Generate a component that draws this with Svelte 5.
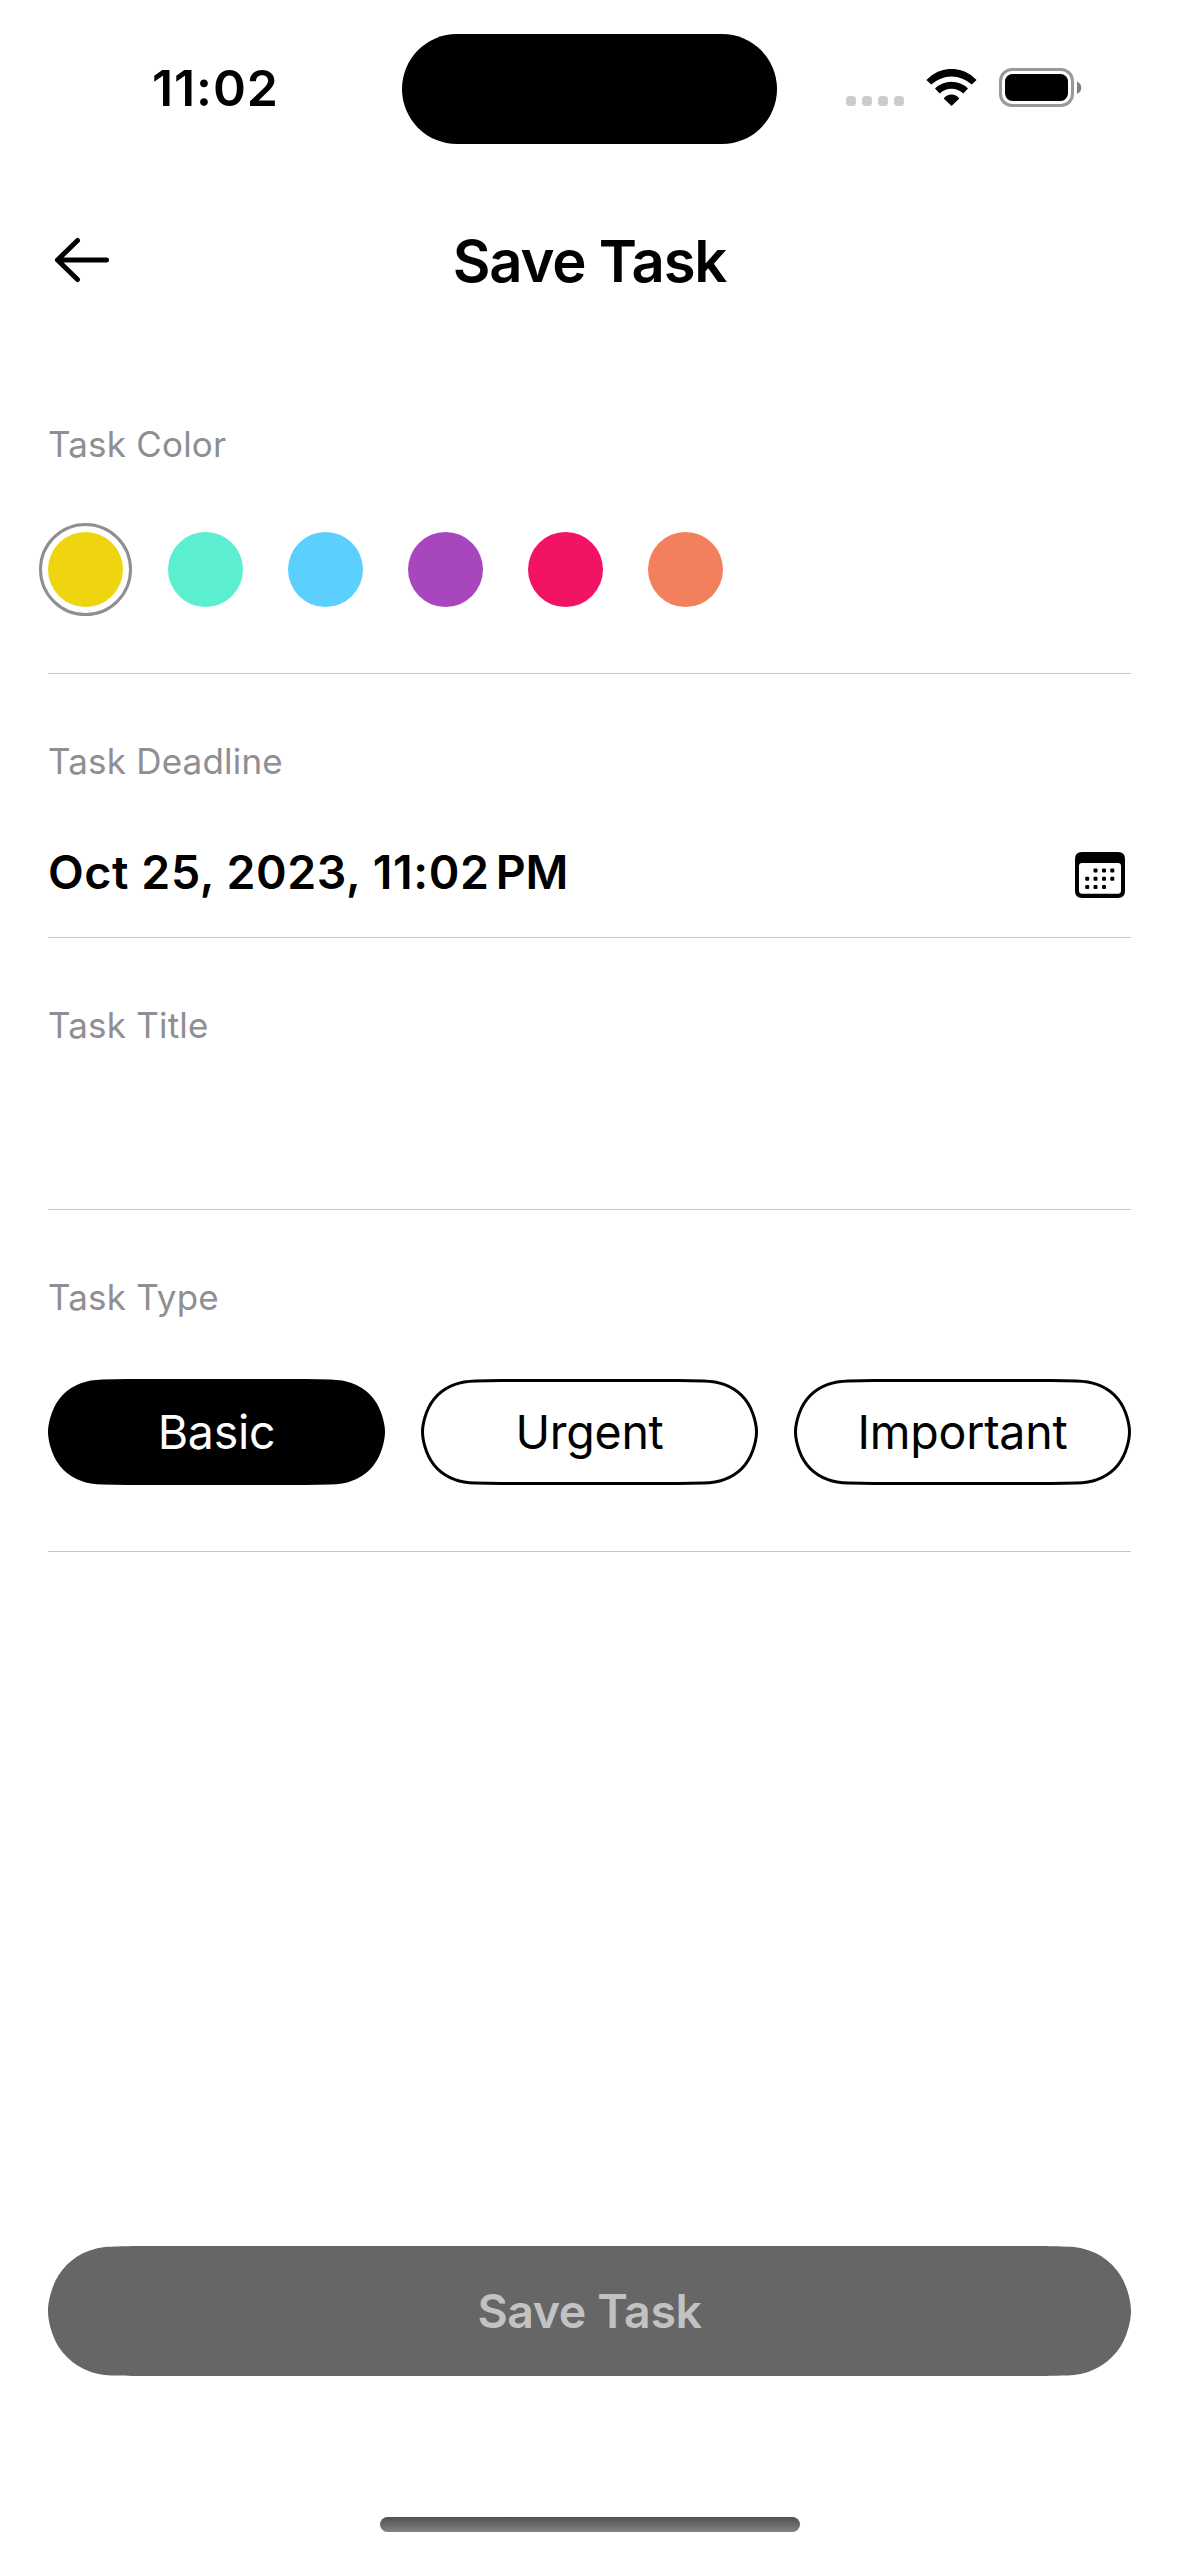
<script>
  const colors = ['#efd510', '#5befcf', '#5bd0ff', '#a746bd', '#f21365', '#f2805c'];
  const types = ['Basic', 'Urgent', 'Important'];
  let color = $state(0);
  let type = $state('Basic');

  // Capsule with continuous (smoothed) corners, inset for a centred stroke.
  function capsule(width, height, inset = 0) {
    const w = width - inset * 2;
    const h = height - inset * 2;
    const r = h / 2;
    // Control points from the flat edge round to the side, in units of r.
    const points = [
      [1.5287, 0],
      [1.3, 0], [1.15, 0.004], [1.03, 0.008],
      [0.88, 0.013], [0.77, 0.022], [0.6315, 0.0749],
      [0.3728, 0.1691], [0.1691, 0.3728], [0.0749, 0.6315],
      [0.0374, 0.7351], [0, 0.87], [0, 1]
    ];
    const place = (right, bottom) =>
      points.map(([x, y]) => {
        const px = right ? inset + w - x * r : inset + x * r;
        const py = bottom ? inset + h - y * r : inset + y * r;
        return `${px.toFixed(2)} ${py.toFixed(2)}`;
      });
    const right = [...place(true, false), ...place(true, true).reverse().slice(1)];
    const left = [...place(false, true), ...place(false, false).reverse().slice(1)];
    return `M${right[0]}C${right.slice(1).join(' ')}L${left[0]}C${left.slice(1).join(' ')}Z`;
  }

  const calendarDots = [
    [20.5, 18.5], [29, 18.5], [37.3, 18.5],
    [12.2, 26.7], [20.5, 26.7], [29, 26.7], [37.3, 26.7],
    [12.2, 35], [20.5, 35], [29, 35]
  ];
</script>

<div class="screen">
  <header class="status">
    <div class="time">11:02</div>
    <div class="island"></div>
    <div class="indicators">
      <div class="cell"><i></i><i></i><i></i><i></i></div>
      <svg class="wifi" width="51" height="38" viewBox="0 0 51 38">
        <path d="M0.4 11A33.9 33.9 0 0 1 50.6 11L45.8 15.6A29.8 29.8 0 0 0 5.2 15.6Z" />
        <path d="M9 19.4A24 24 0 0 1 42 19.4L37.3 24.4A17.2 17.2 0 0 0 13.7 24.4Z" />
        <path d="M17.7 29.6C21.5 24 29.5 24 33.3 29.6L25.5 37Z" />
      </svg>
      <svg class="battery" width="83" height="39" viewBox="0 0 83 39">
        <rect x="1.5" y="1.5" width="72" height="36" rx="11.5" fill="none" stroke="#999" stroke-width="3" />
        <rect x="6" y="6" width="63" height="27" rx="7.5" />
        <path d="M78 13.5Q82.3 15.5 82.3 19.7T78 26Z" fill="#808080" />
      </svg>
    </div>
  </header>

  <nav class="nav">
    <button class="back" aria-label="Back">
      <svg width="56" height="46" viewBox="0 0 56 46" fill="none" stroke="#000" stroke-width="5" stroke-linecap="round" stroke-linejoin="round">
        <path d="M52.5 23H3.5M23.5 3.5L3.5 23L23.5 42.5" />
      </svg>
    </button>
    <h1>Save Task</h1>
  </nav>

  <main>
    <section class="colors">
      <div class="label">Task Color</div>
      <div class="swatches">
        {#each colors as c, i}
          <button class="swatch" class:selected={color === i} style:background={c} aria-label={`Color ${i + 1}`} onclick={() => (color = i)}></button>
        {/each}
      </div>
    </section>

    <section class="deadline">
      <div class="label">Task Deadline</div>
      <div class="date-row">
        <span class="date">Oct 25, 2023, 11:02<span class="pm">PM</span></span>
        <svg class="calendar" width="50" height="46" viewBox="0 0 50 46">
          <path fill-rule="evenodd" d="M7 0H43Q50 0 50 7V39Q50 46 43 46H7Q0 46 0 39V7Q0 0 7 0ZM7 11Q4 11 4 14V38.5Q4 41.7 7 41.7H43Q46 41.7 46 38.5V14Q46 11 43 11Z" />
          {#each calendarDots as [x, y]}
            <rect x={x - 2} y={y - 2} width="4" height="4" rx="1" />
          {/each}
        </svg>
      </div>
    </section>

    <section class="title">
      <div class="label">Task Title</div>
    </section>

    <section class="type">
      <div class="label">Task Type</div>
      <div class="pills">
        {#each types as t}
          <button class="pill" class:active={type === t} onclick={() => (type = t)}>
            <svg class="shape" width="337" height="106" viewBox="0 0 337 106"><path d={capsule(337, 106, 1.5)} /></svg>
            <span>{t}</span>
          </button>
        {/each}
      </div>
    </section>
  </main>

  <footer>
    <button class="save">
      <svg class="shape" width="1083" height="130" viewBox="0 0 1083 130"><path d={capsule(1083, 130)} /></svg>
      <span>Save Task</span>
    </button>
    <div class="home"></div>
  </footer>
</div>

<style>
  :global(body) { background: #fff; }
  .screen {
    width: 1179px; height: 2556px; box-sizing: border-box; overflow: hidden;
    display: flex; flex-direction: column; background: #fff; color: #000;
    font-family: Inter, "Liberation Sans", sans-serif; font-kerning: normal;
  }
  button { border: 0; padding: 0; background: none; font: inherit; color: inherit; }
  svg { display: block; }
  .status { height: 178px; display: grid; grid-template-columns: 402px 375px 402px; flex: none; }
  .time { padding: 58px 0 0 152px; font-size: 50px; line-height: 60px; font-weight: 600; letter-spacing: 0.9px; white-space: nowrap; }
  .island { height: 110px; margin-top: 34px; border-radius: 55px; background: #000; }
  .indicators { display: flex; align-items: flex-start; padding: 68px 0 0 69px; }
  .cell { display: flex; gap: 6px; margin: 28px 22px 0 0; }
  .cell i { width: 10px; height: 10px; border-radius: 3.5px; background: #ccc; }
  .wifi { margin: 1px 22px 0 0; }
  .nav { height: 164px; flex: none; display: grid; grid-template-columns: 200px 1fr 200px; align-items: center; }
  .back { padding-left: 54px; width: 110px; }
  h1 { margin: 2px 0 0; text-align: center; font-size: 58px; line-height: 70px; font-weight: 600; letter-spacing: -1.2px; white-space: nowrap; }
  main { padding: 0 48px; flex: 1; }
  section { box-sizing: border-box; border-bottom: 1px solid #c6c6c8; }
  .label { font-size: 35px; line-height: 44px; letter-spacing: 0.2px; color: #8e8e93; white-space: nowrap; }
  .colors { height: 332px; padding-top: 80px; }
  .deadline { height: 264px; padding-top: 65px; }
  .title { height: 272px; padding-top: 65px; }
  .type { height: 342px; padding-top: 65px; }
  .swatches { display: flex; gap: 45px; margin-top: 66px; }
  .swatch { width: 75px; height: 75px; border-radius: 50%; }
  .selected { outline: 3px solid #8e8e93; outline-offset: 6px; }
  .date-row { display: flex; justify-content: space-between; align-items: center; padding-right: 6px; margin-top: 59px; height: 60px; }
  .date { font-size: 46.5px; font-weight: 600; line-height: 60px; letter-spacing: 0.6px; white-space: nowrap; }
  .pm { margin-left: 6px; letter-spacing: 0; }
  .calendar { margin-top: 6px; }
  .pills { display: grid; grid-template-columns: repeat(3, 337px); gap: 36px; margin-top: 60px; }
  .pill { position: relative; height: 106px; font-size: 46.5px; line-height: 60px; letter-spacing: -0.25px; }
  .shape { position: absolute; inset: 0; fill: none; stroke: #000; stroke-width: 3; }
  .pill.active { color: #fff; }
  .active .shape { fill: #000; }
  .pill span, .save span { position: relative; }
  footer { height: 310px; flex: none; display: flex; flex-direction: column; align-items: center; }
  .save { position: relative; width: 1083px; height: 130px; flex: none; font-size: 46.5px; font-weight: 600; letter-spacing: -0.4px; color: #c2c2c2; }
  .save .shape { fill: #666; stroke: none; }
  .home { width: 420px; height: 15px; margin-top: 141px; border-radius: 8px; background: linear-gradient(#505050, #828282); }
</style>
